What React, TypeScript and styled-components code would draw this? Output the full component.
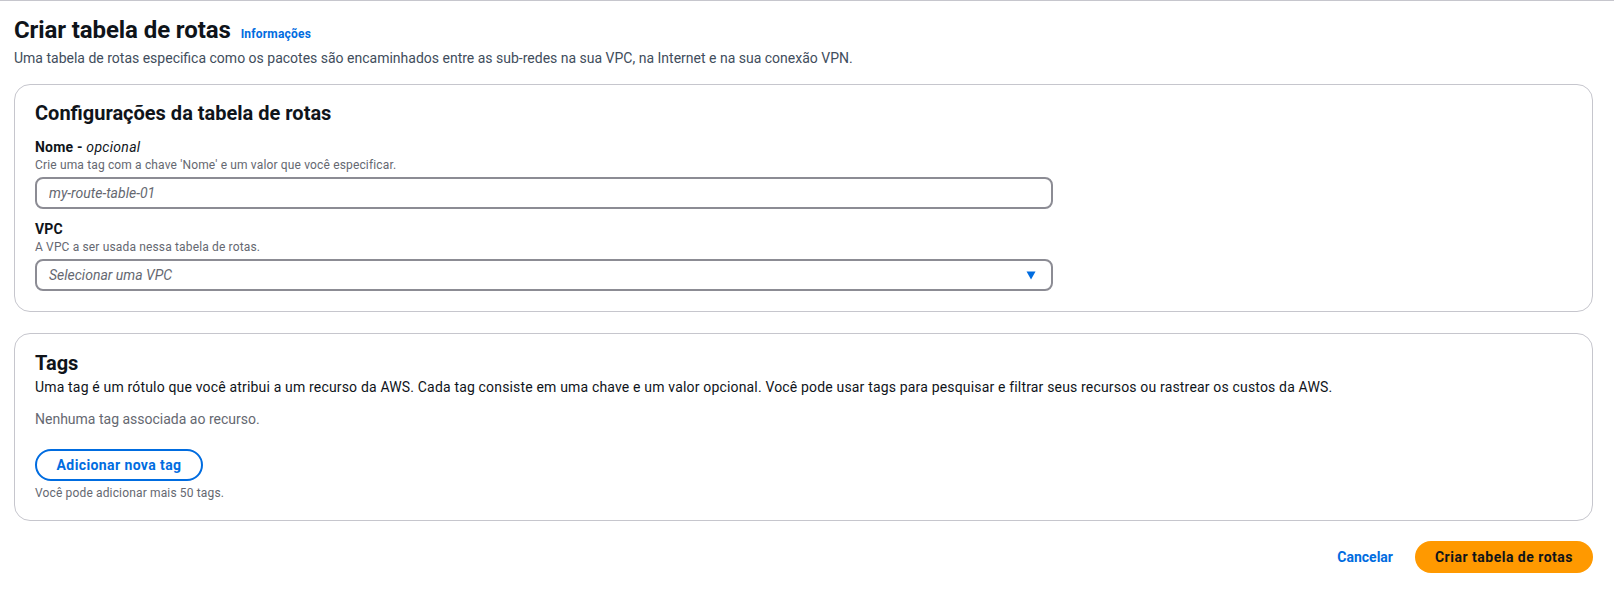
import React from "react";
import styled, { createGlobalStyle } from "styled-components";

const GlobalStyle = createGlobalStyle`
  * { box-sizing: border-box; }
  html, body { margin: 0; padding: 0; background: #ffffff; }
  body {
    font-family: Roboto, "Liberation Sans", Arial, sans-serif;
    color: #0f141a;
    -webkit-font-smoothing: antialiased;
  }
`;

const Page = styled.div`
  border-top: 1px solid #c6c6cd;
  padding: 14px 21px 0 14px;
  display: flex;
  flex-direction: column;
`;

const HeaderRow = styled.div`
  display: flex;
  align-items: baseline;
  gap: 10px;
`;

const Title = styled.h1`
  margin: 0;
  font-size: 24px;
  line-height: 30px;
  font-weight: 700;
  color: #0f141a;
  letter-spacing: -0.1px;
`;

const InfoLink = styled.a`
  font-size: 12px;
  line-height: 16px;
  font-weight: 700;
  color: #006ce0;
  text-decoration: none;
  letter-spacing: 0.2px;
  cursor: pointer;
`;

const PageDescription = styled.p`
  margin: 3px 0 0;
  font-size: 14px;
  line-height: 20px;
  color: #414d5c;
`;

const Card = styled.section<{ $top: number; $titleGap?: number; $bottom?: number }>`
  margin-top: ${(p) => p.$top}px;
  border: 1px solid #c6c6cd;
  border-radius: 16px;
  padding: ${(p) => 16 + (p.$titleGap ?? 0)}px 20px ${(p) => p.$bottom ?? 20}px;
  display: flex;
  flex-direction: column;
`;

const CardTitle = styled.h2`
  margin: 0;
  font-size: 20px;
  line-height: 24px;
  font-weight: 700;
  color: #0f141a;
`;

const Field = styled.div<{ $top: number }>`
  margin-top: ${(p) => p.$top}px;
  display: flex;
  flex-direction: column;
`;

const Label = styled.label`
  font-size: 14px;
  line-height: 20px;
  font-weight: 700;
  color: #0f141a;
  letter-spacing: 0.2px;

  em {
    font-weight: 400;
    font-style: italic;
    letter-spacing: 0.3px;
  }
`;

const Hint = styled.div<{ $top?: number }>`
  margin-top: ${(p) => p.$top ?? 0}px;
  font-size: 12px;
  line-height: 16px;
  letter-spacing: 0.15px;
  color: #656871;
`;

const TextInput = styled.input`
  margin-top: 4px;
  width: 1018px;
  height: 32px;
  border: 2px solid #8c8c94;
  border-radius: 8px;
  padding: 0 12px;
  font-family: Roboto, "Liberation Sans", Arial, sans-serif;
  font-size: 14px;
  color: #0f141a;
  background: #ffffff;
  outline: none;

  &::placeholder {
    color: #656871;
    font-style: italic;
  }
`;

const SelectBox = styled.button`
  margin-top: 4px;
  width: 1018px;
  height: 32px;
  border: 2px solid #8c8c94;
  border-radius: 8px;
  padding: 0 15px 0 12px;
  background: #ffffff;
  display: flex;
  align-items: center;
  justify-content: space-between;
  font-family: Roboto, "Liberation Sans", Arial, sans-serif;
  font-size: 14px;
  font-style: italic;
  color: #656871;
  cursor: pointer;
`;

const Caret = styled.svg`
  width: 10px;
  height: 10px;
  fill: #006ce0;
`;

const BodyText = styled.p<{ $top: number; $muted?: boolean; $spacing?: number }>`
  margin: ${(p) => p.$top}px 0 0;
  font-size: 14px;
  line-height: 20px;
  letter-spacing: ${(p) => p.$spacing ?? 0}px;
  color: ${(p) => (p.$muted ? "#656871" : "#0f141a")};
`;

const OutlineButton = styled.button`
  margin-top: 20px;
  align-self: flex-start;
  height: 32px;
  width: 168px;
  border: 2px solid #006ce0;
  border-radius: 20px;
  background: #ffffff;
  color: #006ce0;
  font-family: Roboto, "Liberation Sans", Arial, sans-serif;
  font-size: 14px;
  font-weight: 700;
  letter-spacing: 0.4px;
  cursor: pointer;
`;

const Footer = styled.div`
  margin-top: 20px;
  display: flex;
  justify-content: flex-end;
  align-items: center;
  gap: 22px;
`;

const LinkButton = styled.button`
  border: none;
  background: none;
  padding: 0;
  color: #006ce0;
  font-family: Roboto, "Liberation Sans", Arial, sans-serif;
  font-size: 14px;
  font-weight: 700;
  cursor: pointer;
`;

const PrimaryButton = styled.button`
  height: 32px;
  width: 178px;
  border: none;
  border-radius: 20px;
  background: #ff9900;
  color: #0f141a;
  font-family: Roboto, "Liberation Sans", Arial, sans-serif;
  font-size: 14px;
  font-weight: 700;
  letter-spacing: 0.5px;
  cursor: pointer;
`;

export default function App() {
  return (
    <>
      <GlobalStyle />
      <Page>
        <HeaderRow>
          <Title>Criar tabela de rotas</Title>
          <InfoLink>Informações</InfoLink>
        </HeaderRow>
        <PageDescription>
          Uma tabela de rotas especifica como os pacotes são encaminhados entre as sub-redes na sua VPC, na Internet e na sua conexão VPN.
        </PageDescription>

        <Card $top={16}>
          <CardTitle>Configurações da tabela de rotas</CardTitle>
          <Field $top={12}>
            <Label>
              Nome - <em>opcional</em>
            </Label>
            <Hint>Crie uma tag com a chave 'Nome' e um valor que você especificar.</Hint>
            <TextInput placeholder="my-route-table-01" />
          </Field>
          <Field $top={10}>
            <Label>VPC</Label>
            <Hint>A VPC a ser usada nessa tabela de rotas.</Hint>
            <SelectBox>
              <span>Selecionar uma VPC</span>
              <Caret viewBox="0 0 10 10">
                <path d="M0.5 1.5h9L5 9.5z" />
              </Caret>
            </SelectBox>
          </Field>
        </Card>

        <Card $top={21} $titleGap={1} $bottom={19}>
          <CardTitle>Tags</CardTitle>
          <BodyText $top={2} $spacing={0.17}>
            Uma tag é um rótulo que você atribui a um recurso da AWS. Cada tag consiste em uma chave e um valor opcional. Você pode usar tags para pesquisar e filtrar seus recursos ou rastrear os custos da AWS.
          </BodyText>
          <BodyText $top={12} $muted>
            Nenhuma tag associada ao recurso.
          </BodyText>
          <OutlineButton>Adicionar nova tag</OutlineButton>
          <Hint $top={4}>Você pode adicionar mais 50 tags.</Hint>
        </Card>

        <Footer>
          <LinkButton>Cancelar</LinkButton>
          <PrimaryButton>Criar tabela de rotas</PrimaryButton>
        </Footer>
      </Page>
    </>
  );
}
